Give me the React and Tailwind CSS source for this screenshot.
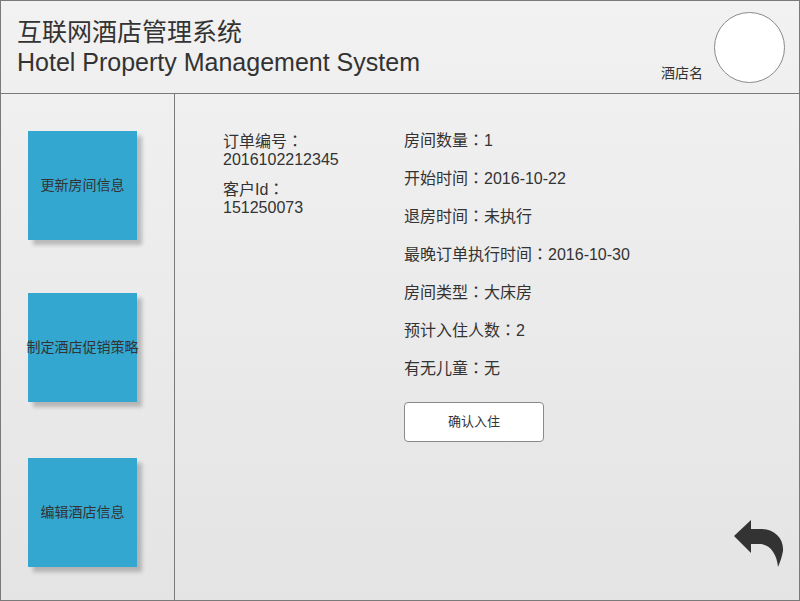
import React from 'react';

const FONT = { fontFamily: '"Liberation Sans", "Noto Sans CJK SC", sans-serif' };
const COLON_FONT = { fontFamily: '"Noto Sans CJK TC", sans-serif' };

const MENU = ['更新房间信息', '制定酒店促销策略', '编辑酒店信息'];

const DETAILS = [
  ['房间数量', '1'],
  ['开始时间', '2016-10-22'],
  ['退房时间', '未执行'],
  ['最晚订单执行时间', '2016-10-30'],
  ['房间类型', '大床房'],
  ['预计入住人数', '2'],
  ['有无儿童', '无'],
];

function Colon() {
  return <span className="leading-none" style={COLON_FONT}>：</span>;
}

function MenuTile({ label, className }) {
  return (
    <div
      className={`w-[109px] h-[109px] bg-[#33a7cf] flex items-center justify-center text-[14px] text-[#333] whitespace-nowrap shadow-[5px_5px_4px_rgba(0,0,0,0.22)] ${className}`}
    >
      {label}
    </div>
  );
}

function BackArrow() {
  return (
    <svg width="52" height="50" viewBox="0 0 52 50" className="text-[#333]">
      <path
        d="M1 17 L18 1 L18 10 L28 10 C42 10 51 20 50 32 C49 38 47 43 45 48 C44 36 38 26 28 25 L18 25 L18 34 Z"
        fill="currentColor"
      />
    </svg>
  );
}

export default function App() {
  return (
    <div
      className="w-[800px] h-[601px] border border-[#7a7a7a] flex flex-col text-[#333] bg-gradient-to-b from-[#f2f2f2] to-[#e4e4e4]"
      style={FONT}
    >
      {/* Header */}
      <div className="h-[93px] border-b border-[#7a7a7a] flex shrink-0 bg-gradient-to-b from-[#f2f2f2] to-[#efefef]">
        <div className="pl-[16px] pt-[15px] flex-1">
          <div className="text-[25px] leading-[32px]">互联网酒店管理系统</div>
          <div className="text-[25px] leading-[28px]">Hotel Property Management System</div>
        </div>
        <div className="flex items-end pb-[9px] mr-[11px] text-[14px]">酒店名</div>
        <div className="pt-[11px] pr-[14px]">
          <div className="w-[71px] h-[71px] rounded-full bg-white border border-[#8a8a8a]" />
        </div>
      </div>

      {/* Body */}
      <div className="flex flex-1">
        <div className="w-[174px] border-r border-[#7a7a7a] shrink-0 pl-[27px] pt-[37px]">
          <MenuTile label={MENU[0]} />
          <MenuTile label={MENU[1]} className="mt-[53px]" />
          <MenuTile label={MENU[2]} className="mt-[56px]" />
        </div>

        <div className="flex-1 flex flex-col">
          <div className="flex pt-[37px] text-[16px]">
            <div className="w-[229px] shrink-0 pl-[48px] leading-[18px] pt-[1px]">
              <div>订单编号<Colon /></div>
              <div>2016102212345</div>
              <div className="mt-[11px]">客户Id<Colon /></div>
              <div>151250073</div>
            </div>
            <div className="flex flex-col">
              {DETAILS.map(([k, v]) => (
                <div key={k} className="h-[38px] leading-[18px]">
                  {k}<Colon />{v}
                </div>
              ))}
              <button className="mt-[5px] w-[140px] h-[40px] bg-white border border-[#8a8a8a] rounded-[4px] text-[13px] text-[#333]">
                确认入住
              </button>
            </div>
          </div>
          <div className="flex-1 flex items-end justify-end pr-[14px] pb-[31px]">
            <BackArrow />
          </div>
        </div>
      </div>
    </div>
  );
}
